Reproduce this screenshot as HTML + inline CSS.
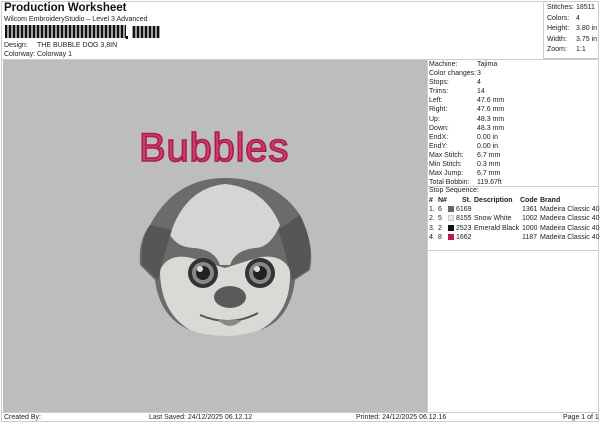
<!DOCTYPE html><html><head><style>
*{margin:0;padding:0;box-sizing:border-box}
body{width:600px;height:424px;background:#fff;font-family:"Liberation Sans",sans-serif;font-size:7px;color:#222;position:relative;overflow:hidden}
.a{position:absolute;white-space:nowrap}
</style></head><body>
<div class="a" style="left:1px;top:1px;width:598px;height:421px;border:1px solid #ccc"></div>
<div class="a" style="left:4px;top:2px;font-size:11.5px;font-weight:bold;color:#111">Production Worksheet</div>
<div class="a" style="left:4px;top:16px">Wilcom EmbroideryStudio – Level 3 Advanced</div>
<svg class="a" style="left:5px;top:25px" width="155" height="14">
<defs><pattern id="bc" width="4" height="14" patternUnits="userSpaceOnUse"><rect x="0" width="2" height="14" fill="#111"/><rect x="2.6" width="0.8" height="14" fill="#111"/></pattern></defs>
<rect x="0" y="0" width="121" height="13" fill="url(#bc)"/>
<rect x="127" y="1" width="29" height="12" fill="url(#bc)"/>
<rect x="121" y="11" width="2" height="3" fill="#111"/>
</svg>
<div class="a" style="left:4px;top:42px">Design:</div><div class="a" style="left:37px;top:42px">THE BUBBLE DOG 3,8IN</div>
<div class="a" style="left:4px;top:51px">Colorway:</div><div class="a" style="left:37px;top:51px">Colorway 1</div>
<div class="a" style="left:543px;top:1px;width:56px;height:58px;border-left:1px solid #ccc;border-bottom:1px solid #ccc"></div>
<div class="a" style="left:547px;top:3px;line-height:10.5px">Stitches:<br>Colors:<br>Height:<br>Width:<br>Zoom:</div>
<div class="a" style="left:576px;top:3px;line-height:10.5px">18511<br>4<br>3.80 in<br>3.75 in<br>1:1</div>
<div class="a" style="left:1px;top:59px;width:598px;border-top:1px solid #ccc"></div>
<div class="a" style="left:3px;top:60px;width:424px;height:352px;background:#bdbdbd"></div>
<div class="a" style="left:427px;top:60px;width:1px;height:352px;background:#ccc"></div>
<div class="a" style="left:429px;top:60px;line-height:9.1px">Machine:<br>Color changes:<br>Stops:<br>Trims:<br>Left:<br>Right:<br>Up:<br>Down:<br>EndX:<br>EndY:<br>Max Stitch:<br>Min Stitch:<br>Max Jump:<br>Total Bobbin:</div>
<div class="a" style="left:477px;top:60px;line-height:9.1px">Tajima<br>3<br>4<br>14<br>47.6 mm<br>47.6 mm<br>48.3 mm<br>48.3 mm<br>0.00 in<br>0.00 in<br>6.7 mm<br>0.3 mm<br>6.7 mm<br>119.67ft</div>
<div class="a" style="left:428px;top:186px;width:171px;border-top:1px solid #ccc"></div>
<div class="a" style="left:429px;top:187px">Stop Sequence:</div>
<div class="a" style="left:428px;top:250px;width:171px;border-top:1px solid #ccc"></div>
<div class="a" style="left:429px;top:196px;line-height:9.2px">
<div style="font-weight:bold;text-decoration:underline;position:relative;height:9.2px"><span class="a" style="left:0">#</span><span class="a" style="left:9px">N#</span><span class="a" style="left:33px">St.</span><span class="a" style="left:45px">Description</span><span class="a" style="left:91px">Code</span><span class="a" style="left:111px">Brand</span></div>
<div style="position:relative;height:9.2px"><span class="a">1.</span><span class="a" style="left:9px">6</span><span class="a" style="left:19px;top:1px;width:6px;height:6px;background:#666"></span><span class="a" style="left:27px">6169</span><span class="a" style="left:93px">1361</span><span class="a" style="left:111px">Madeira Classic 40</span></div>
<div style="position:relative;height:9.2px"><span class="a">2.</span><span class="a" style="left:9px">5</span><span class="a" style="left:19px;top:1px;width:6px;height:6px;background:#e8e8ee;border:1px solid #ccc"></span><span class="a" style="left:27px">8155</span><span class="a" style="left:45px">Snow White</span><span class="a" style="left:93px">1002</span><span class="a" style="left:111px">Madeira Classic 40</span></div>
<div style="position:relative;height:9.2px"><span class="a">3.</span><span class="a" style="left:9px">2</span><span class="a" style="left:19px;top:1px;width:6px;height:6px;background:#111"></span><span class="a" style="left:27px">2523</span><span class="a" style="left:45px">Emerald Black</span><span class="a" style="left:93px">1000</span><span class="a" style="left:111px">Madeira Classic 40</span></div>
<div style="position:relative;height:9.2px"><span class="a">4.</span><span class="a" style="left:9px">8</span><span class="a" style="left:19px;top:1px;width:6px;height:6px;background:#c0164e"></span><span class="a" style="left:27px">1662</span><span class="a" style="left:93px">1187</span><span class="a" style="left:111px">Madeira Classic 40</span></div>
</div>
<div class="a" style="left:1px;top:412px;width:598px;border-top:1px solid #ccc"></div>
<div class="a" style="left:4px;top:414px">Created By:</div>
<div class="a" style="left:149px;top:414px">Last Saved: 24/12/2025 06.12.12</div>
<div class="a" style="left:356px;top:414px">Printed: 24/12/2025 06.12.16</div>
<div class="a" style="left:563px;top:414px">Page 1 of 1</div>
<div class="a" style="left:139px;top:126px;font-size:40px;color:#d23a73;letter-spacing:0.8px;-webkit-text-stroke:1.6px #a8204f">Bubbles</div>
<svg class="a" style="left:120px;top:170px" width="200" height="170">
<path d="M30,55 Q55,8 105,8 Q155,8 180,45 Q195,75 190,100 L175,110 Q170,150 140,160 Q105,170 70,160 Q40,148 35,110 L20,95 Q18,70 30,55Z" fill="#6a6c6a"/>
<path d="M50,65 Q65,18 105,14 Q145,18 160,55 Q150,78 135,78 Q115,80 110,95 L100,95 Q95,80 75,78 Q58,78 50,65Z" fill="#d4d6d3"/>
<path d="M40,100 Q50,80 78,90 L105,98 L130,90 Q160,80 170,100 Q172,142 140,160 Q105,172 70,160 Q40,142 40,100Z" fill="#d8dad6"/>
<path d="M30,55 Q20,70 22,95 L38,110 Q45,80 52,60Z" fill="#555755"/>
<path d="M180,45 Q195,75 188,100 L172,110 Q165,80 158,60Z" fill="#555755"/>
<circle cx="83" cy="103" r="15" fill="#333"/><circle cx="83" cy="103" r="11" fill="#888"/><circle cx="83" cy="103" r="7" fill="#222"/><circle cx="80" cy="99" r="3" fill="#ddd"/>
<circle cx="140" cy="103" r="15" fill="#333"/><circle cx="140" cy="103" r="11" fill="#888"/><circle cx="140" cy="103" r="7" fill="#222"/><circle cx="137" cy="99" r="3" fill="#ddd"/>
<ellipse cx="110" cy="127" rx="16" ry="11" fill="#5a5a5a"/>
<path d="M80,145 Q110,158 138,143" stroke="#555" stroke-width="2" fill="none"/>
<path d="M98,150 Q110,162 122,150" fill="#888"/>
</svg>
</body></html>
